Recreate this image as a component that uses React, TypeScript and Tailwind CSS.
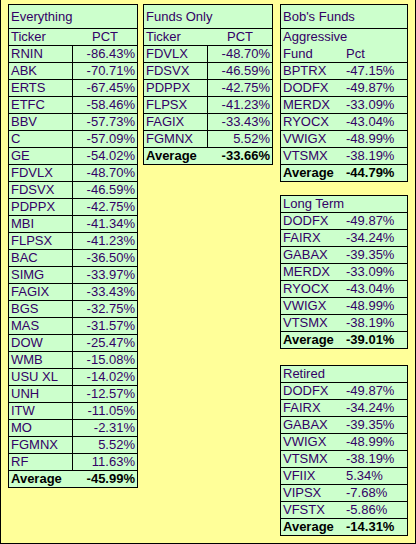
import React from "react";

type Row = [string, string];

const everything: Row[] = [
  ["RNIN", "-86.43%"],
  ["ABK", "-70.71%"],
  ["ERTS", "-67.45%"],
  ["ETFC", "-58.46%"],
  ["BBV", "-57.73%"],
  ["C", "-57.09%"],
  ["GE", "-54.02%"],
  ["FDVLX", "-48.70%"],
  ["FDSVX", "-46.59%"],
  ["PDPPX", "-42.75%"],
  ["MBI", "-41.34%"],
  ["FLPSX", "-41.23%"],
  ["BAC", "-36.50%"],
  ["SIMG", "-33.97%"],
  ["FAGIX", "-33.43%"],
  ["BGS", "-32.75%"],
  ["MAS", "-31.57%"],
  ["DOW", "-25.47%"],
  ["WMB", "-15.08%"],
  ["USU XL", "-14.02%"],
  ["UNH", "-12.57%"],
  ["ITW", "-11.05%"],
  ["MO", "-2.31%"],
  ["FGMNX", "5.52%"],
  ["RF", "11.63%"],
];

const fundsOnly: Row[] = [
  ["FDVLX", "-48.70%"],
  ["FDSVX", "-46.59%"],
  ["PDPPX", "-42.75%"],
  ["FLPSX", "-41.23%"],
  ["FAGIX", "-33.43%"],
  ["FGMNX", "5.52%"],
];

const aggressive: Row[] = [
  ["BPTRX", "-47.15%"],
  ["DODFX", "-49.87%"],
  ["MERDX", "-33.09%"],
  ["RYOCX", "-43.04%"],
  ["VWIGX", "-48.99%"],
  ["VTSMX", "-38.19%"],
];

const longTerm: Row[] = [
  ["DODFX", "-49.87%"],
  ["FAIRX", "-34.24%"],
  ["GABAX", "-39.35%"],
  ["MERDX", "-33.09%"],
  ["RYOCX", "-43.04%"],
  ["VWIGX", "-48.99%"],
  ["VTSMX", "-38.19%"],
];

const retired: Row[] = [
  ["DODFX", "-49.87%"],
  ["FAIRX", "-34.24%"],
  ["GABAX", "-39.35%"],
  ["VWIGX", "-48.99%"],
  ["VTSMX", "-38.19%"],
  ["VFIIX", "5.34%"],
  ["VIPSX", "-7.68%"],
  ["VFSTX", "-5.86%"],
];

// two-column sheet with a divider between ticker and pct
function TickerTable({ title, rows, avg }: { title: string; rows: Row[]; avg: string }) {
  return (
    <div className="w-[130px] border border-black bg-[#ccffcc]">
      <div className="h-[24px] border-b border-black flex items-center pl-[2px]">{title}</div>
      <div className="h-[17px] border-b border-black flex">
        <div className="w-[64px] pl-[2px]">Ticker</div>
        <div className="flex-1 text-center">PCT</div>
      </div>
      {rows.map(([t, v]) => (
        <div key={t} className="h-[17px] border-b border-black flex">
          <div className="w-[64px] border-r border-black pl-[2px]">{t}</div>
          <div className="flex-1 text-right pr-[2px]">{v}</div>
        </div>
      ))}
      <div className="h-[16px] flex font-bold text-black">
        <div className="w-[64px] pl-[2px]">Average</div>
        <div className="flex-1 text-right pr-[2px]">{avg}</div>
      </div>
    </div>
  );
}

// Bob's funds style: no divider, pct left-aligned
function FundTable({
  title,
  rows,
  avg,
  sub,
  className = "",
}: {
  title: string;
  rows: Row[];
  avg: string;
  sub?: string;
  className?: string;
}) {
  return (
    <div className={`w-[128px] border border-black bg-[#ccffcc] ${className}`}>
      {sub ? (
        <>
          <div className="h-[24px] border-b border-black flex items-center pl-[2px]">{title}</div>
          <div className="h-[17px] pl-[2px]">{sub}</div>
          <div className="h-[17px] border-b border-black flex">
            <div className="w-[63px] pl-[2px]">Fund</div>
            <div className="flex-1 pl-[2px]">Pct</div>
          </div>
        </>
      ) : (
        <div className="h-[17px] border-b border-black pl-[2px]">{title}</div>
      )}
      {rows.map(([t, v]) => (
        <div key={t} className="h-[17px] border-b border-black flex">
          <div className="w-[63px] pl-[2px]">{t}</div>
          <div className="flex-1 pl-[2px]">{v}</div>
        </div>
      ))}
      <div className="h-[16px] flex font-bold text-black">
        <div className="w-[63px] pl-[2px]">Average</div>
        <div className="flex-1 pl-[2px]">{avg}</div>
      </div>
    </div>
  );
}

export default function App() {
  return (
    <div className="w-[416px] h-[544px] bg-[#ffff99] border-l border-r border-b border-black pl-[7px] pt-[4px] flex items-start font-['Liberation_Sans',Arial,sans-serif] text-[13px] leading-[16px] text-[#330066]">
      <TickerTable title="Everything" rows={everything} avg="-45.99%" />
      <div className="ml-[5px]">
        <TickerTable title="Funds Only" rows={fundsOnly} avg="-33.66%" />
      </div>
      <div className="ml-[7px] flex flex-col">
        <FundTable title="Bob's Funds" sub="Aggressive" rows={aggressive} avg="-44.79%" />
        <FundTable title="Long Term" rows={longTerm} avg="-39.01%" className="mt-[13px]" />
        <FundTable title="Retired" rows={retired} avg="-14.31%" className="mt-[16px]" />
      </div>
    </div>
  );
}
